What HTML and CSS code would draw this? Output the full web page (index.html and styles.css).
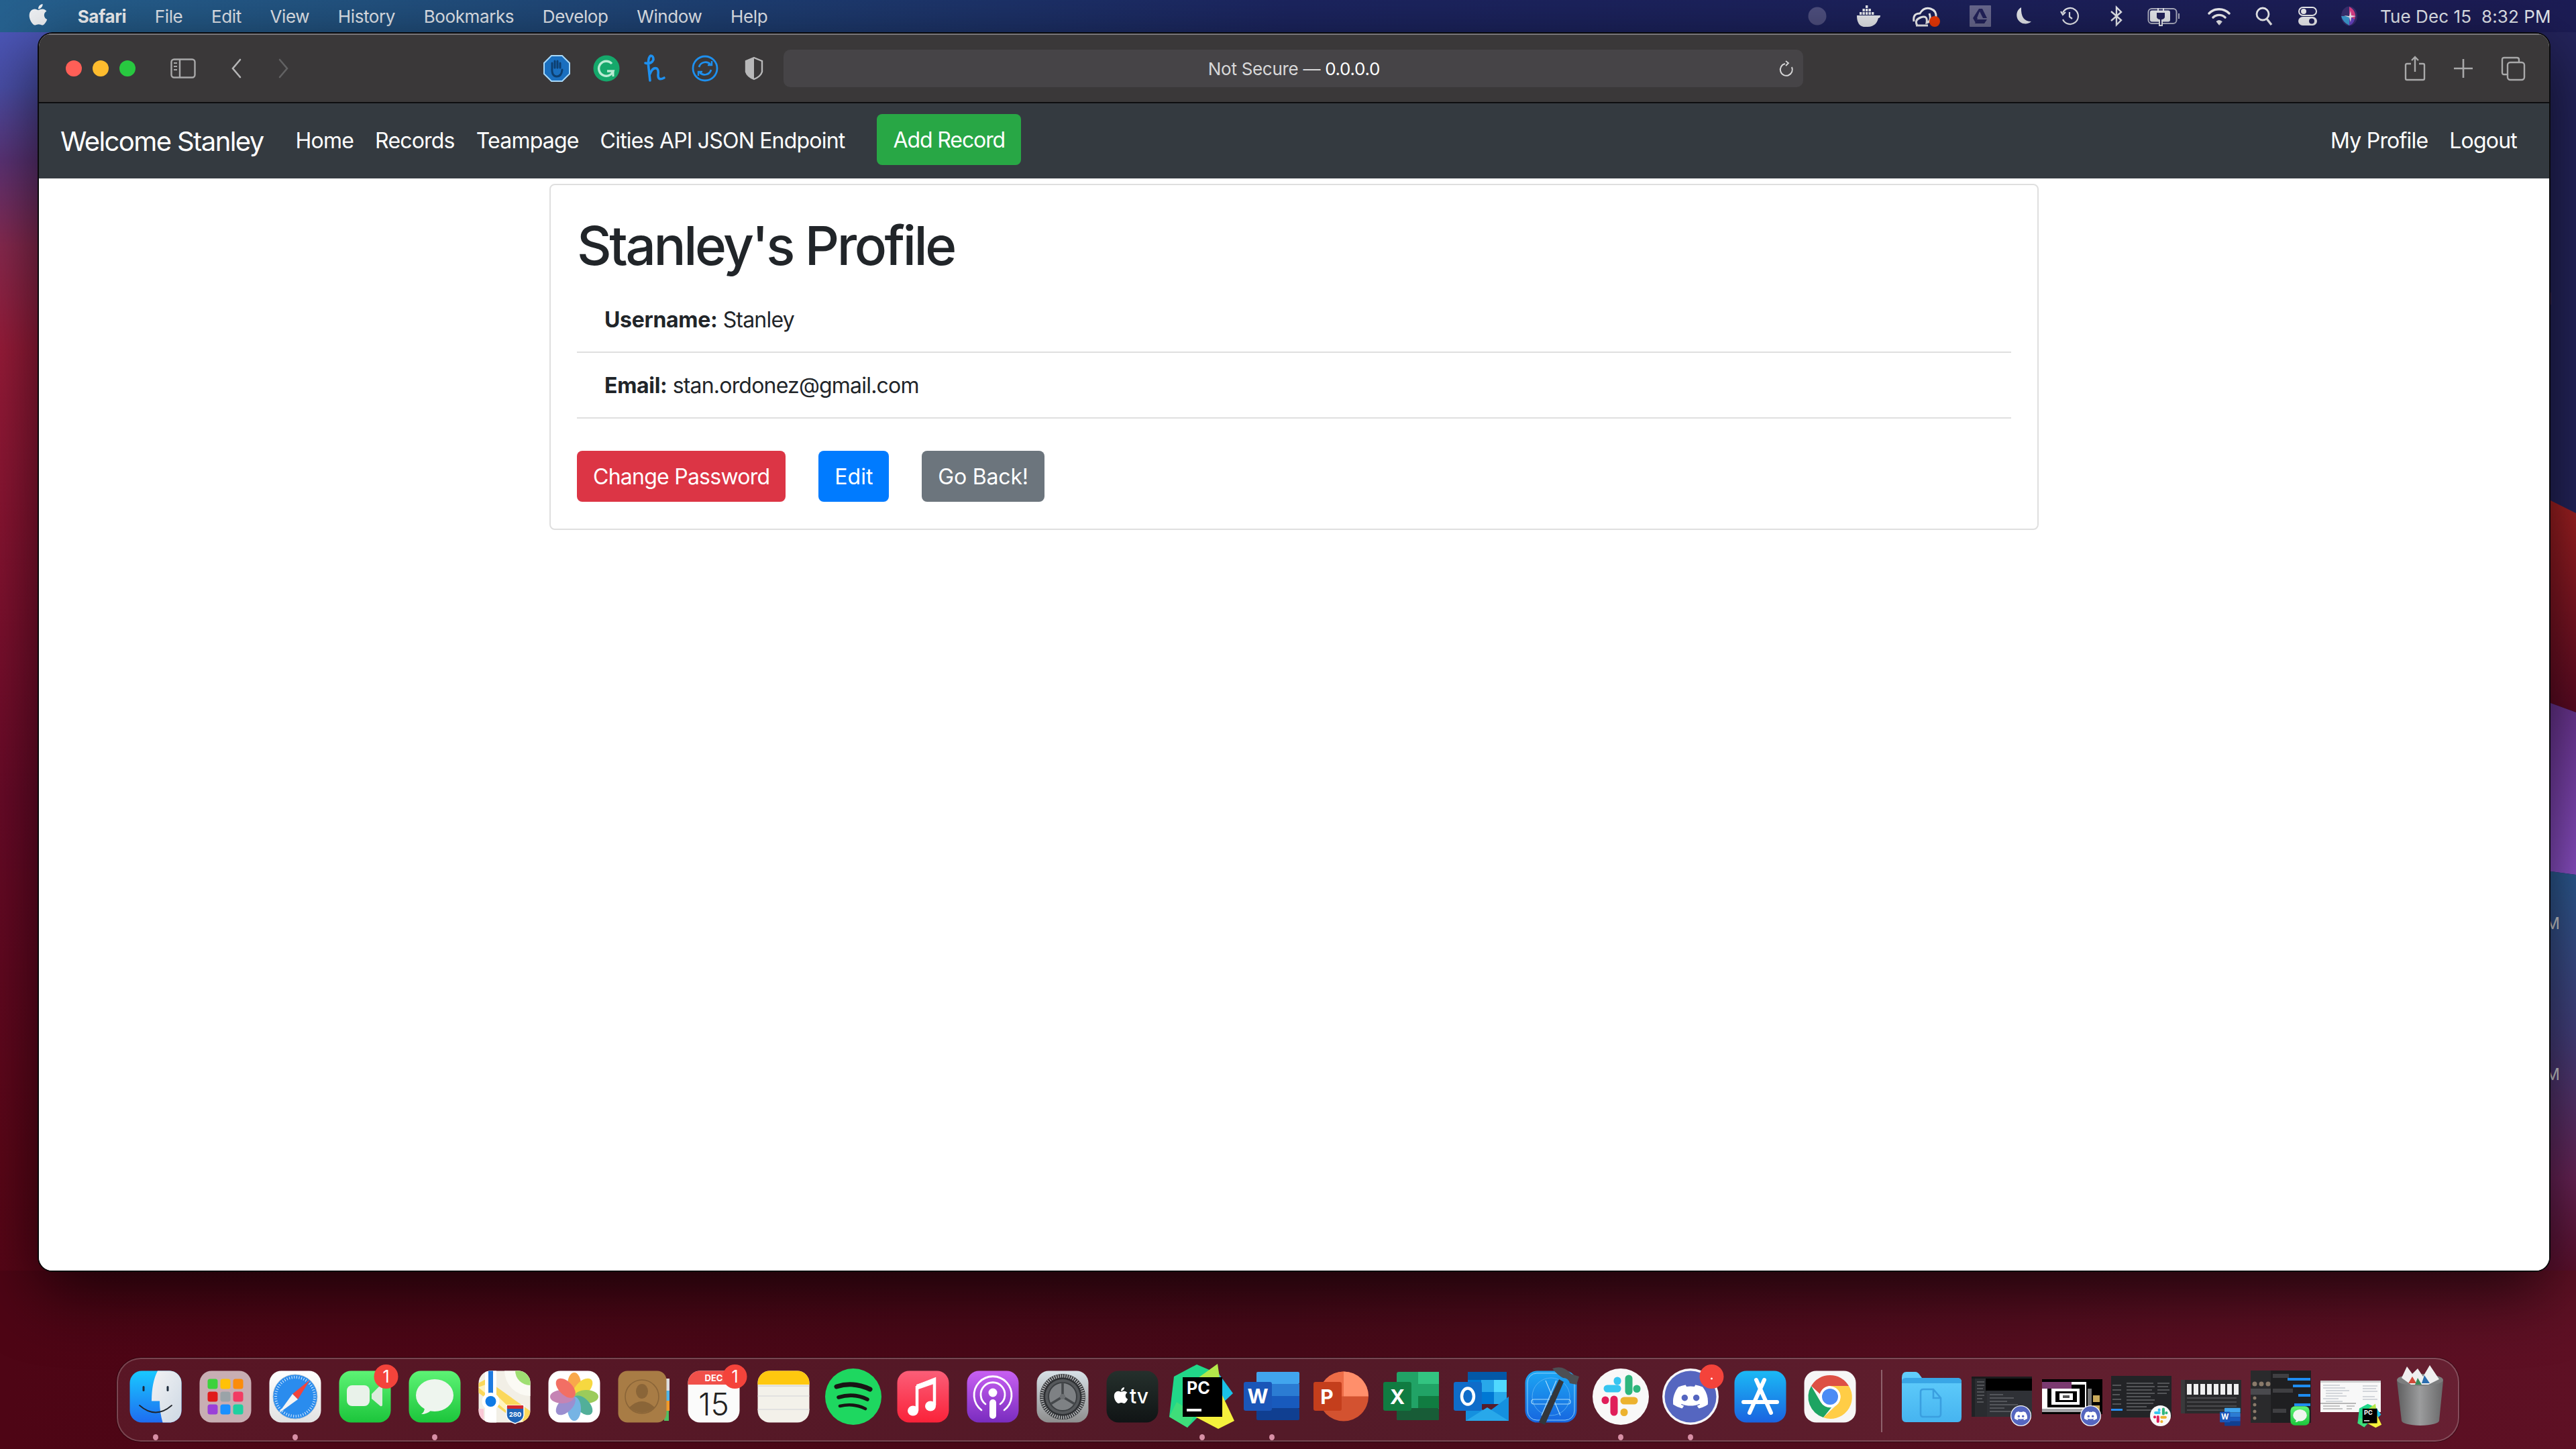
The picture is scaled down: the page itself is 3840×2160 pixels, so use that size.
FILE: index.html
```html
<!DOCTYPE html>
<html lang="en">
<head>
<meta charset="utf-8">
<title>Stanley's Profile</title>
<link rel="stylesheet" href="styles.css">
</head>
<body class="desktop">
<svg class="defs" width="0" height="0" aria-hidden="true">
  <defs>
    <linearGradient id="g-finder" x1="0" y1="0" x2="0" y2="1"><stop offset="0" stop-color="#19c9ff"/><stop offset="1" stop-color="#1e6cf0"/></linearGradient>
    <linearGradient id="g-finderw" x1="0" y1="0" x2="1" y2="1"><stop offset="0" stop-color="#f3f3f4"/><stop offset="1" stop-color="#cdd8e4"/></linearGradient>
    <linearGradient id="g-green" x1="0" y1="0" x2="0" y2="1"><stop offset="0" stop-color="#5df375"/><stop offset="1" stop-color="#1cc53b"/></linearGradient>
    <linearGradient id="g-music" x1="0" y1="0" x2="0" y2="1"><stop offset="0" stop-color="#fb5e78"/><stop offset="1" stop-color="#fa2239"/></linearGradient>
    <linearGradient id="g-pod" x1="0" y1="0" x2="0" y2="1"><stop offset="0" stop-color="#c860f2"/><stop offset="1" stop-color="#7a2cbf"/></linearGradient>
    <linearGradient id="g-sys" x1="0" y1="0" x2="0" y2="1"><stop offset="0" stop-color="#d7e1e7"/><stop offset="1" stop-color="#8e8e8e"/></linearGradient>
    <linearGradient id="g-tv" x1="0" y1="0" x2="0" y2="1"><stop offset="0" stop-color="#25302c"/><stop offset="1" stop-color="#101415"/></linearGradient>
    <linearGradient id="g-app" x1="0" y1="0" x2="0" y2="1"><stop offset="0" stop-color="#1bb9f5"/><stop offset="1" stop-color="#1a63e0"/></linearGradient>
    <linearGradient id="g-xc" x1="0" y1="0" x2="0" y2="1"><stop offset="0" stop-color="#1ca6f3"/><stop offset="1" stop-color="#1766e0"/></linearGradient>
    <linearGradient id="g-trash" x1="0" y1="0" x2="1" y2="0"><stop offset="0" stop-color="#5f5f60"/><stop offset=".5" stop-color="#9b9c9d"/><stop offset="1" stop-color="#69696a"/></linearGradient>
    <linearGradient id="g-white" x1="0" y1="0" x2="0" y2="1"><stop offset="0" stop-color="#ffffff"/><stop offset="1" stop-color="#e2e2e2"/></linearGradient>
    <linearGradient id="g-folder" x1="0" y1="0" x2="0" y2="1"><stop offset="0" stop-color="#62cffc"/><stop offset="1" stop-color="#46b4f0"/></linearGradient>
    <linearGradient id="w-left" x1="0" y1="0" x2="0" y2="1">
      <stop offset="0" stop-color="#4c5ac0"/><stop offset=".06" stop-color="#4a4fa8"/><stop offset=".11" stop-color="#5c3478"/><stop offset=".17" stop-color="#8a2a50"/><stop offset=".24" stop-color="#9a1c3a"/><stop offset=".36" stop-color="#8a1432"/><stop offset=".55" stop-color="#6a0a28"/><stop offset=".8" stop-color="#5c0618"/><stop offset="1" stop-color="#4f0515"/>
    </linearGradient>
    <linearGradient id="w-bottom" x1="0" y1="0" x2="1" y2="0"><stop offset="0" stop-color="#4e0515"/><stop offset=".5" stop-color="#470918"/><stop offset="1" stop-color="#5e1024"/></linearGradient>
    <linearGradient id="w-red" x1="0" y1="0" x2="0" y2="1"><stop offset="0" stop-color="#a82222"/><stop offset="1" stop-color="#5c0a24"/></linearGradient>
    <linearGradient id="w-purple" x1="0" y1="0" x2="0" y2="1"><stop offset="0" stop-color="#6a3490"/><stop offset="1" stop-color="#8f52cc"/></linearGradient>
    <linearGradient id="w-blue" x1="0" y1="0" x2="0" y2="1"><stop offset="0" stop-color="#2c5d96"/><stop offset=".4" stop-color="#45407f"/><stop offset=".75" stop-color="#6a2458"/><stop offset="1" stop-color="#5a0d28"/></linearGradient>

    <clipPath id="c-square"><rect x="3.5" y="3.5" width="77" height="77" rx="18"/></clipPath>

    <symbol id="apple" viewBox="0 0 24 24"><path d="M17.05 20.28c-.98.95-2.05.8-3.08.35-1.09-.46-2.09-.48-3.24 0-1.44.62-2.2.44-3.06-.35C2.79 15.25 3.51 7.59 9.05 7.31c1.35.07 2.29.74 3.08.8 1.18-.24 2.31-.93 3.57-.84 1.51.12 2.65.72 3.4 1.8-3.12 1.87-2.38 5.98.48 7.13-.57 1.5-1.31 2.99-2.54 4.09zM12.03 7.25c-.15-2.23 1.66-4.07 3.74-4.25.29 2.58-2.34 4.5-3.74 4.25z"/></symbol>

    <symbol id="i-finder" viewBox="0 0 84 84" class="sym">
      <rect x="3.5" y="3.5" width="77" height="77" rx="18" fill="url(#g-finder)"/>
      <path d="M45 3.5H62.5A18 18 0 0 1 80.5 21.5V62.5A18 18 0 0 1 62.5 80.5H52.5C49.5 70 48 60 48 48.5H36C36 30 39 15 45 3.5Z" fill="url(#g-finderw)"/>
      <rect x="22.5" y="26" width="3" height="8" rx="1.5" fill="#1b2a3a"/><rect x="58.5" y="26" width="3" height="8" rx="1.5" fill="#1b2a3a"/>
      <path d="M18 55Q42 76 66 55" fill="none" stroke="#20242a" stroke-width="1.8" stroke-linecap="round"/>
    </symbol>
    <symbol id="i-launch" viewBox="0 0 84 84" class="sym">
      <rect x="3.5" y="3.5" width="77" height="77" rx="18" fill="#c8aeb3"/>
      <rect x="15.5" y="15.5" width="15" height="15" rx="3.5" fill="#3cd23c"/><rect x="34.5" y="15.5" width="15" height="15" rx="3.5" fill="#ffc107"/><rect x="53.5" y="15.5" width="15" height="15" rx="3.5" fill="#fb8c0c"/>
      <rect x="15.5" y="34.5" width="15" height="15" rx="3.5" fill="#e01b1b"/><rect x="34.5" y="34.5" width="15" height="15" rx="3.5" fill="#9aa3a8"/><rect x="53.5" y="34.5" width="15" height="15" rx="3.5" fill="#f23c63"/>
      <rect x="15.5" y="53.5" width="15" height="15" rx="3.5" fill="#9a3fd8"/><rect x="34.5" y="53.5" width="15" height="15" rx="3.5" fill="#1a90ff"/><rect x="53.5" y="53.5" width="15" height="15" rx="3.5" fill="#1fd0a0"/>
    </symbol>
    <symbol id="i-safari" viewBox="0 0 84 84" class="sym">
      <rect x="3.5" y="3.5" width="77" height="77" rx="18" fill="url(#g-white)"/>
      <circle cx="42" cy="42" r="33" fill="#2a8cee" stroke="#9bb9d6" stroke-width="1"/>
      <circle cx="42" cy="42" r="29" fill="none" stroke="#fff" stroke-width="4" stroke-dasharray="1 2.64" opacity=".85"/>
      <polygon points="64,17 46,46 38,38" fill="#f0443c"/><polygon points="17,67 38,38 46,46" fill="#f4f4f4"/>
    </symbol>
    <symbol id="i-facetime" viewBox="0 0 84 84" class="sym">
      <rect x="3.5" y="3.5" width="77" height="77" rx="18" fill="url(#g-green)"/>
      <rect x="15" y="25" width="34" height="31" rx="8" fill="#e9f2ea"/>
      <path d="M52 38L65 25Q68 24 68 27V54Q68 57 65 56L52 45Z" fill="#dcebdd"/>
    </symbol>
    <symbol id="i-messages" viewBox="0 0 84 84" class="sym">
      <rect x="3.5" y="3.5" width="77" height="77" rx="18" fill="url(#g-green)"/>
      <ellipse cx="42" cy="40" rx="28" ry="24" fill="#eef5ee"/>
      <path d="M27 58Q27 65 22 68Q31 68 37 62Z" fill="#eef5ee"/>
    </symbol>
    <symbol id="i-maps" viewBox="0 0 84 84" class="sym">
      <g clip-path="url(#c-square)">
        <rect x="3" y="3" width="78" height="78" fill="#f2efe6"/>
        <circle cx="80" cy="3" r="38" fill="#fbfaf4"/><circle cx="80" cy="3" r="22" fill="#9fdf72"/>
        <rect x="3" y="60" width="8" height="22" fill="#f9c9d6"/>
        <polygon points="3,22 14,16 84,66 84,84 68,84 3,36" fill="#fbd85b"/>
        <polygon points="3,28 14,24 76,84 70,84" fill="#fff3c0"/>
        <rect x="13" y="3" width="17" height="78" fill="#fff"/><rect x="18" y="3" width="7" height="38" fill="#1f7ae0"/>
        <circle cx="21.5" cy="49" r="13" fill="#fff"/><circle cx="21.5" cy="49" r="8" fill="#0f7ae5"/>
      </g>
      <path d="M45 55H71V70Q70 78 58 82Q46 78 45 70Z" fill="#1e65b8" stroke="#fff" stroke-width="1.5"/>
      <rect x="46" y="55" width="24" height="5" fill="#d2272d"/>
      <text x="58" y="72" class="svg-bold" font-size="9.5" fill="#fff" text-anchor="middle">280</text>
    </symbol>
    <symbol id="i-photos" viewBox="0 0 84 84" class="sym">
      <rect x="3.5" y="3.5" width="77" height="77" rx="18" fill="#fff"/>
      <g opacity=".85">
        <ellipse cx="42" cy="24" rx="10" ry="18" fill="#f89a2c"/>
        <ellipse cx="42" cy="24" rx="10" ry="18" fill="#f5d21f" transform="rotate(45 42 42)"/>
        <ellipse cx="42" cy="24" rx="10" ry="18" fill="#8ac33f" transform="rotate(90 42 42)"/>
        <ellipse cx="42" cy="24" rx="10" ry="18" fill="#35a288" transform="rotate(135 42 42)"/>
        <ellipse cx="42" cy="24" rx="10" ry="18" fill="#5fa8e0" transform="rotate(180 42 42)"/>
        <ellipse cx="42" cy="24" rx="10" ry="18" fill="#8a7cc8" transform="rotate(225 42 42)"/>
        <ellipse cx="42" cy="24" rx="10" ry="18" fill="#bb6fa8" transform="rotate(270 42 42)"/>
        <ellipse cx="42" cy="24" rx="10" ry="18" fill="#f0564a" transform="rotate(315 42 42)"/>
      </g>
    </symbol>
    <symbol id="i-contacts" viewBox="0 0 84 84" class="sym">
      <rect x="72" y="15" width="8" height="18" fill="#ddd"/><rect x="72" y="33" width="8" height="15" fill="#4fb5e8"/><rect x="72" y="48" width="8" height="15" fill="#f09a2a"/><rect x="72" y="63" width="7" height="15" fill="#4fc060"/>
      <rect x="3.5" y="3.5" width="72" height="77" rx="14" fill="#a87c45"/>
      <circle cx="39" cy="42" r="25" fill="none" stroke="#8a6538" stroke-width="1.6"/>
      <ellipse cx="39" cy="34" rx="9" ry="11" fill="#8a6538"/>
      <path d="M20 58Q39 40 58 58Q39 74 20 58Z" fill="#8a6538"/>
    </symbol>
    <symbol id="i-calendar" viewBox="0 0 84 84" class="sym">
      <rect x="3.5" y="3.5" width="77" height="77" rx="18" fill="#fbfbfb"/>
      <path d="M3.5 24V21.5A18 18 0 0 1 21.5 3.5H62.5A18 18 0 0 1 80.5 21.5V24Z" fill="#f0504a"/>
      <text x="42" y="19" class="svg-bold" font-size="13" fill="#fff" text-anchor="middle">DEC</text>
      <text x="42" y="70" class="svg-light" font-size="46" fill="#222" text-anchor="middle">15</text>
    </symbol>
    <symbol id="i-notes" viewBox="0 0 84 84" class="sym">
      <rect x="3.5" y="3.5" width="77" height="77" rx="18" fill="#f3f1ea"/>
      <path d="M3.5 24V21.5A18 18 0 0 1 21.5 3.5H62.5A18 18 0 0 1 80.5 21.5V24Z" fill="#fec80f"/>
      <line x1="3.5" y1="26" x2="80.5" y2="26" stroke="#bbb" stroke-width="1.6" stroke-dasharray="1 1"/>
      <line x1="3.5" y1="41" x2="80.5" y2="41" stroke="#ddd" stroke-width="1.4"/><line x1="3.5" y1="61" x2="80.5" y2="61" stroke="#ddd" stroke-width="1.4"/>
    </symbol>
    <symbol id="i-spotify" viewBox="0 0 84 84" class="sym">
      <circle cx="42" cy="42" r="42" fill="#1ed760"/>
      <g fill="none" stroke="#191414" stroke-linecap="round">
        <path d="M17 27Q42 19 67 31" stroke-width="7"/><path d="M20 43Q42 36 63 46" stroke-width="5.6"/><path d="M22 56Q42 51 60 60" stroke-width="4.6"/>
      </g>
    </symbol>
    <symbol id="i-music" viewBox="0 0 84 84" class="sym">
      <rect x="3.5" y="3.5" width="77" height="77" rx="18" fill="url(#g-music)"/>
      <path d="M34 26L59 16V55" fill="none" stroke="#fff" stroke-width="4.5"/>
      <path d="M33 26V63" fill="none" stroke="#fff" stroke-width="4.5"/>
      <ellipse cx="27" cy="63" rx="8" ry="7.5" fill="#fff"/><ellipse cx="53" cy="56" rx="8" ry="7.5" fill="#fff"/>
      <polygon points="32,24 61,14 61,22 32,32" fill="#fff"/>
    </symbol>
    <symbol id="i-podcasts" viewBox="0 0 84 84" class="sym">
      <rect x="3.5" y="3.5" width="77" height="77" rx="18" fill="url(#g-pod)"/>
      <g fill="none" stroke="#fff" stroke-linecap="round">
        <path d="M25 62A28 28 0 1 1 59 62" stroke-width="2.8"/><path d="M31 53A18 18 0 1 1 53 53" stroke-width="2.8"/>
      </g>
      <circle cx="42" cy="36" r="6.5" fill="#fff"/><rect x="37" y="46" width="10" height="29" rx="5" fill="#fff"/>
    </symbol>
    <symbol id="i-system" viewBox="0 0 84 84" class="sym">
      <rect x="3.5" y="3.5" width="77" height="77" rx="18" fill="url(#g-sys)"/>
      <circle cx="42" cy="42" r="34" fill="#2e3033"/>
      <circle cx="42" cy="42" r="31" fill="none" stroke="#b4b6b8" stroke-width="5" stroke-dasharray="1.6 1.7"/>
      <circle cx="42" cy="42" r="26" fill="#55585b"/><circle cx="42" cy="42" r="21" fill="#7e8184" stroke="#3b3e41" stroke-width="2"/>
      <g stroke="#45484b" stroke-width="3.6"><line x1="42" y1="42" x2="42" y2="21"/><line x1="42" y1="42" x2="24" y2="53"/><line x1="42" y1="42" x2="60" y2="53"/></g>
      <circle cx="42" cy="42" r="4" fill="#6c6f72"/>
    </symbol>
    <symbol id="i-tv" viewBox="0 0 84 84" class="sym">
      <rect x="3.5" y="3.5" width="77" height="77" rx="18" fill="url(#g-tv)"/>
      <use href="#apple" x="9" y="24" width="32" height="32" fill="#fff"/>
      <text x="38" y="52" class="svg-med" font-size="30" fill="#fff">tv</text>
    </symbol>
    <symbol id="i-pycharm" viewBox="0 0 84 84" class="sym">
      <polygon points="67,8 88,37 72,52" fill="#19c1e6"/>
      <polygon points="0,12 34,-6 62,6 60,48 20,88 -7,72" fill="#21d789"/>
      <polygon points="36,14 65,-7 72,40" fill="#b4e84a"/>
      <polygon points="72,40 90,78 66,90 28,70 36,50" fill="#f5f03c"/>
      <polygon points="-7,72 20,88 32,68 4,50" fill="#3fdd7a"/>
      <rect x="13" y="13" width="59" height="59" fill="#000"/>
      <text x="19" y="38" class="svg-bold" font-size="25" fill="#fff">PC</text>
      <rect x="19" y="60" width="22" height="4" fill="#fff"/>
    </symbol>
    <symbol id="i-word" viewBox="0 0 84 84" class="sym">
      <rect x="19" y="5" width="64" height="18" rx="2" fill="#41a5ee"/><rect x="19" y="23" width="64" height="18" fill="#2b7cd3"/><rect x="19" y="41" width="64" height="18" fill="#185abd"/><rect x="19" y="59" width="64" height="18" rx="2" fill="#103f91"/>
      <rect x="0" y="20" width="42" height="43" rx="3" fill="#1a56b8"/>
      <text x="21" y="52" class="svg-bold" font-size="30" fill="#fff" text-anchor="middle">W</text>
    </symbol>
    <symbol id="i-ppt" viewBox="0 0 84 84" class="sym">
      <circle cx="45" cy="41.5" r="37" fill="#d35230"/>
      <path d="M45 4.5A37 37 0 0 1 82 41.5H45Z" fill="#ff8f6b"/>
      <path d="M45 4.5A37 37 0 0 0 8 41.5H45Z" fill="#ed6c47"/>
      <rect x="0" y="20" width="42" height="43" rx="3" fill="#c43e1c"/>
      <text x="20" y="53" class="svg-bold" font-size="30" fill="#fff" text-anchor="middle">P</text>
    </symbol>
    <symbol id="i-excel" viewBox="0 0 84 84" class="sym">
      <rect x="20" y="5" width="63" height="72" rx="3" fill="#21a366"/>
      <rect x="52" y="5" width="31" height="18" fill="#33c481"/><rect x="52" y="41" width="31" height="18" fill="#107c41"/>
      <rect x="20" y="59" width="63" height="18" rx="2" fill="#185c37"/><rect x="20" y="23" width="32" height="18" fill="#21a366"/>
      <rect x="0" y="20" width="42" height="43" rx="3" fill="#107c41"/>
      <text x="21" y="53" class="svg-bold" font-size="30" fill="#fff" text-anchor="middle">X</text>
    </symbol>
    <symbol id="i-outlook" viewBox="0 0 84 84" class="sym">
      <rect x="22" y="5" width="58" height="12" fill="#0358a7"/>
      <rect x="22" y="17" width="20" height="18" fill="#0078d4"/><rect x="42" y="17" width="19" height="18" fill="#28a8ea"/><rect x="61" y="17" width="19" height="18" fill="#50d9ff"/>
      <rect x="22" y="35" width="20" height="18" fill="#0364b8"/><rect x="42" y="35" width="19" height="18" fill="#0078d4"/><rect x="61" y="35" width="19" height="18" fill="#28a8ea"/>
      <polygon points="19,78 19,46 51,66 83,42 83,78" fill="#1490df"/>
      <polygon points="19,78 51,58 83,78" fill="#28a8ea"/>
      <rect x="1" y="20" width="42" height="43" rx="3" fill="#0f6cc9"/>
      <ellipse cx="22" cy="41.5" rx="9" ry="12" fill="none" stroke="#fff" stroke-width="4.5"/>
    </symbol>
    <symbol id="i-xcode" viewBox="0 0 84 84" class="sym">
      <rect x="3.5" y="3.5" width="77" height="77" rx="18" fill="url(#g-xc)"/>
      <rect x="7" y="7" width="70" height="70" rx="14" fill="none" stroke="#8fd0fa" stroke-width="1"/>
      <circle cx="42" cy="42" r="28" fill="none" stroke="#66b8f4" stroke-width=".8"/>
      <g fill="none" stroke="#a9dcfb" stroke-width="1.2"><path d="M34 18L56 70M50 18L28 70"/><rect x="13" y="46" width="58" height="7" rx="3.5"/></g>
      <polygon points="54,16 61,20 33,84 24,80" fill="#33363b"/>
      <path d="M44 0Q60 -6 72 8L84 12L80 24L70 22Q68 14 60 14Q52 10 44 0Z" fill="#4d4f54"/>
    </symbol>
    <symbol id="i-slack" viewBox="0 0 84 84" class="sym">
      <circle cx="42" cy="42" r="42" fill="#f8f8f8"/>
      <g stroke-linecap="round" stroke-width="11" fill="none">
        <path d="M37 30H22" stroke="#36c5f0"/><path d="M37 18V19" stroke="#36c5f0"/>
        <path d="M54 15V34" stroke="#2eb67d"/><path d="M66 30V30.5" stroke="#2eb67d"/>
        <path d="M47 48H62" stroke="#ecb22e"/><path d="M47 65V65.5" stroke="#ecb22e"/>
        <path d="M32 46V65" stroke="#e01e5a"/><path d="M19 47V47.5" stroke="#e01e5a"/>
      </g>
    </symbol>
    <symbol id="i-discord" viewBox="0 0 84 84" class="sym">
      <circle cx="42" cy="42" r="42" fill="#f6f6f8"/>
      <circle cx="42" cy="42" r="38.5" fill="#5566c0"/>
      <svg x="16" y="19" width="52" height="46" viewBox="0 0 24 24" preserveAspectRatio="none"><path fill="#fff" d="M20.317 4.37a19.791 19.791 0 0 0-4.885-1.515.074.074 0 0 0-.079.037c-.21.375-.444.864-.608 1.25a18.27 18.27 0 0 0-5.487 0 12.64 12.64 0 0 0-.617-1.25.077.077 0 0 0-.079-.037A19.736 19.736 0 0 0 3.677 4.37a.07.07 0 0 0-.032.027C.533 9.046-.32 13.58.099 18.057a.082.082 0 0 0 .031.057 19.9 19.9 0 0 0 5.993 3.03.078.078 0 0 0 .084-.028 14.09 14.09 0 0 0 1.226-1.994.076.076 0 0 0-.041-.106 13.107 13.107 0 0 1-1.872-.892.077.077 0 0 1-.008-.128 10.2 10.2 0 0 0 .372-.292.074.074 0 0 1 .077-.01c3.928 1.793 8.18 1.793 12.062 0a.074.074 0 0 1 .078.01c.12.098.246.198.373.292a.077.077 0 0 1-.006.127 12.299 12.299 0 0 1-1.873.892.077.077 0 0 0-.041.107c.36.698.772 1.362 1.225 1.993a.076.076 0 0 0 .084.028 19.839 19.839 0 0 0 6.002-3.03.077.077 0 0 0 .032-.054c.5-5.177-.838-9.674-3.549-13.66a.061.061 0 0 0-.031-.03zM8.02 15.33c-1.183 0-2.157-1.085-2.157-2.419 0-1.333.956-2.419 2.157-2.419 1.21 0 2.176 1.096 2.157 2.42 0 1.333-.956 2.418-2.157 2.418zm7.975 0c-1.183 0-2.157-1.085-2.157-2.419 0-1.333.955-2.419 2.157-2.419 1.21 0 2.176 1.096 2.157 2.42 0 1.333-.946 2.418-2.157 2.418z"/></svg>
    </symbol>
    <symbol id="i-appstore" viewBox="0 0 84 84" class="sym">
      <rect x="3.5" y="3.5" width="77" height="77" rx="18" fill="url(#g-app)"/>
      <g fill="none" stroke="#fff" stroke-linecap="round">
        <path d="M36 17L58 66" stroke-width="6"/><path d="M48 17L26 66" stroke-width="6"/><path d="M17 50H67" stroke-width="6"/>
      </g>
    </symbol>
    <symbol id="i-chrome" viewBox="0 0 84 84" class="sym">
      <rect x="3.5" y="3.5" width="77" height="77" rx="18" fill="#f6f6f6"/>
      <path d="M42 10A32 32 0 0 1 70 26H42A16 16 0 0 0 27 38L14 26A32 32 0 0 1 42 10Z" fill="#dd5044"/>
      <path d="M14 26L28 50A16 16 0 0 0 44 58L32 73A32 32 0 0 1 14 26Z" fill="#1da462"/>
      <path d="M70 26A32 32 0 0 1 32 73L50 56A16 16 0 0 0 55 34L42 26Z" fill="#ffcd46"/>
      <circle cx="42" cy="42" r="15.5" fill="#fff"/><circle cx="42" cy="42" r="12" fill="#4c8bf5"/>
    </symbol>
  </defs>
</svg>

<svg class="wallpaper" width="3840" height="2160" viewBox="0 0 3840 2160" aria-hidden="true">
  <rect x="0" y="0" width="1920" height="2160" fill="url(#w-left)"/>
  <rect x="1920" y="0" width="1920" height="2160" fill="#24245c"/>
  <polygon points="3780,735 3840,765 3840,1062 3780,1040" fill="url(#w-red)"/>
  <polygon points="3780,1040 3840,1062 3840,1304 3780,1296" fill="url(#w-purple)"/>
  <polygon points="3780,1296 3840,1304 3840,1910 3780,1910" fill="url(#w-blue)"/>
  <rect x="0" y="1894" width="3840" height="266" fill="url(#w-bottom)"/>
</svg>

<span class="desk-label label-a">PM</span>
<span class="desk-label label-b">PM</span>
<span class="desk-label label-c">PM</span>

<header class="menubar">
  <nav class="menu-left">
    <svg class="apple-logo" width="28" height="32" viewBox="4 3 16 18.3" fill="#f0f2f5"><use href="#apple" x="0" y="0" width="24" height="24"/></svg>
    <span class="menu-app">Safari</span>
    <span>File</span><span>Edit</span><span>View</span><span>History</span><span>Bookmarks</span><span>Develop</span><span>Window</span><span>Help</span>
  </nav>
  <div class="status">
    <svg width="28" height="30" viewBox="0 0 28 30"><circle cx="14" cy="15" r="13.5" fill="#4f5080"/></svg>
    <svg width="40" height="32" viewBox="0 0 40 32" fill="#eceef2"><path d="M2 15H37Q37 19 34 19Q31 32 18 32H12Q2 30 2 15Z"/><g fill="#eceef2"><rect x="6" y="10" width="3.4" height="4"/><rect x="10.5" y="10" width="3.4" height="4"/><rect x="15" y="10" width="3.4" height="4"/><rect x="19.5" y="10" width="3.4" height="4"/><rect x="24" y="10" width="3.4" height="4"/><rect x="10.5" y="5" width="3.4" height="4"/><rect x="15" y="5" width="3.4" height="4"/><rect x="19.5" y="5" width="3.4" height="4"/><rect x="15" y="0" width="3.4" height="4"/></g></svg>
    <svg width="44" height="32" viewBox="0 0 44 32"><path d="M3 24Q1 12 12 12Q18 2 28 5Q37 8 36 18" fill="none" stroke="#f2f2f4" stroke-width="3"/><path d="M8 30Q3 22 13 18Q24 14 22 26Q30 24 26 12" fill="none" stroke="#f2f2f4" stroke-width="3"/><path d="M6 30H24" stroke="#f2f2f4" stroke-width="3"/><ellipse cx="34" cy="24" rx="8" ry="8" fill="#f23a08"/></svg>
    <svg width="32" height="32" viewBox="0 0 32 32"><rect width="32" height="32" rx="1" fill="#6a6a90"/><path d="M14 5H19L26 19H12L9 26L5 19Z" fill="#23235c"/><path d="M15 9L20 19H11Z" fill="#6a6a90"/><path d="M11 21H26L22 27H8Z" fill="#23235c"/></svg>
    <svg width="28" height="28" viewBox="0 0 28 28"><path d="M11 1A13 13 0 1 0 26 22Q10 22 11 1Z" fill="#e9ebf0"/></svg>
    <svg width="30" height="28" viewBox="0 0 30 28" fill="none" stroke="#e9ebf0" stroke-width="2.2"><path d="M5 9A12 12 0 1 1 5 19"/><path d="M2 7L5 12L9 8"/><path d="M15 8V15L19 18"/></svg>
    <svg width="22" height="32" viewBox="0 0 22 32" fill="none" stroke="#e9ebf0" stroke-width="2.4"><path d="M3 9L18 22L11 29V3L18 10L3 23"/></svg>
    <svg width="50" height="28" viewBox="0 0 50 28"><rect x="1.500" y="3" width="42" height="22" rx="5" fill="none" stroke="#aeb0c4" stroke-width="2"/><rect x="4" y="5.500" width="30" height="17" rx="3" fill="#e9ebf0"/><path d="M47 10V18" stroke="#aeb0c4" stroke-width="2"/><path d="M16 2V8M24 2V8M13 8H27V15Q27 19 22 20V28H18V20Q13 19 13 15Z" fill="#23235c" stroke="#e9ebf0" stroke-width="2"/></svg>
    <svg width="36" height="28" viewBox="0 0 36 28" fill="none" stroke="#f2f2f5" stroke-linecap="round"><path d="M3 10A21 21 0 0 1 33 10" stroke-width="3.400"/><path d="M9 16A13 13 0 0 1 27 16" stroke-width="3.400"/><path d="M18 27L14 22Q18 19 22 22Z" fill="#f2f2f5" stroke-width="1"/></svg>
    <svg width="26" height="28" viewBox="0 0 26 28" fill="none" stroke="#f2f2f5" stroke-width="2.800"><circle cx="11" cy="11" r="9"/><path d="M17 18L24 27" stroke-width="3.400"/></svg>
    <svg width="28" height="28" viewBox="0 0 28 28"><rect x="1" y="1" width="26" height="12" rx="6" fill="#23235c" stroke="#f2f2f5" stroke-width="2"/><circle cx="8" cy="7" r="4" fill="#f2f2f5"/><rect x="0" y="15" width="28" height="13" rx="6.500" fill="#f2f2f5"/><circle cx="20" cy="21.500" r="4" fill="#23235c"/></svg>
    <svg width="24" height="30" viewBox="0 0 24 30"><ellipse cx="12" cy="15" rx="12" ry="14.500" fill="#3a2f70"/><path d="M12 1Q24 8 20 20L12 15Z" fill="#e0408a"/><path d="M0 15Q2 24 12 29L12 15Z" fill="#3f9fd8"/><path d="M12 15L20 20Q18 27 12 29Z" fill="#6a44c8"/><path d="M4 14L12 15L14 7L15 14L22 15L15 17L14 24L12 17Z" fill="#f2f2f8"/></svg>
    <span class="clock">Tue Dec 15&nbsp; 8:32 PM</span>
  </div>
</header>

<main class="window">
  <div class="toolbar">
    <div class="traffic"><i class="light red"></i><i class="light amber"></i><i class="light green"></i></div>
    <svg class="tb-sidebar" width="38" height="30" viewBox="0 0 38 30" fill="none" stroke="#a9a9aa" stroke-width="2.400"><rect x="1.500" y="1.500" width="35" height="27" rx="4"/><path d="M14 1.500V28.500"/><path d="M5 7H10M5 12H10M5 17H10" stroke-width="2"/></svg>
    <svg class="tb-back" width="16" height="30" viewBox="0 0 16 30" fill="none" stroke="#b5b5b6" stroke-width="2.600" stroke-linecap="round"><path d="M14 2L3 15L14 28"/></svg>
    <svg class="tb-forward" width="16" height="30" viewBox="0 0 16 30" fill="none" stroke="#626263" stroke-width="2.600" stroke-linecap="round"><path d="M2 2L13 15L2 28"/></svg>
    <div class="extensions">
      <svg width="40" height="40" viewBox="0 0 40 40"><polygon points="12,1 28,1 39,12 39,28 28,39 12,39 1,28 1,12" fill="#1a6fbf" stroke="#a8d8f8" stroke-width="2"/><path d="M13 19V12M17 19V9M21 19V9M25 19V12M13 19Q12 32 20 32Q27 32 28 22" fill="none" stroke="#0d3f70" stroke-width="3" stroke-linecap="round"/></svg>
      <svg width="40" height="40" viewBox="0 0 40 40"><circle cx="20" cy="20" r="19.500" fill="#15a86b"/><path d="M28 13A11 11 0 1 0 30 24H21" fill="none" stroke="#b9ecd3" stroke-width="3.400"/><path d="M30 24V32" stroke="#b9ecd3" stroke-width="3"/></svg>
      <svg width="40" height="40" viewBox="0 0 40 40" fill="none" stroke="#1e90ef" stroke-width="3.600" stroke-linecap="round"><path d="M5 12Q14 14 17 7Q17 1 13 1Q8 4 10 20L12 38"/><path d="M12 28Q16 18 22 20Q25 22 24 30Q24 39 33 34"/></svg>
      <svg width="40" height="40" viewBox="0 0 40 40" fill="none" stroke="#1e90ef" stroke-width="2.800"><circle cx="20" cy="20" r="18"/><path d="M11 18A10 10 0 0 1 28 14"/><path d="M29 22A10 10 0 0 1 12 26"/><path d="M24 15H30V9" stroke-width="2.400"/><path d="M16 25H10V31" stroke-width="2.400"/></svg>
      <svg class="ext-shield" width="28" height="34" viewBox="0 0 28 34"><path d="M14 1L26 6V22Q24 29 14 33Q4 29 2 22V6Z" fill="none" stroke="#b8b8b9" stroke-width="2.400"/><path d="M14 1L2 6V22Q4 29 14 33Z" fill="#b8b8b9"/></svg>
    </div>
    <div class="address">
      <span class="address-text"><span class="dim">Not Secure — </span>0.0.0.0</span>
      <svg class="reload" width="22" height="26" viewBox="0 0 22 26" fill="none" stroke="#d5d5d6" stroke-width="2"><path d="M9 5A9 9 0 1 0 19 10"/><path d="M10 1L14 4L10 8" stroke-width="1.800"/></svg>
    </div>
    <div class="toolbar-right">
      <svg width="32" height="38" viewBox="0 0 32 38" fill="none" stroke="#a9a9aa" stroke-width="2.400"><path d="M10 12H4Q2 12 2 14V34Q2 36 4 36H28Q30 36 30 34V14Q30 12 28 12H22"/><path d="M16 24V2M11 7L16 2L21 7"/></svg>
      <svg width="28" height="28" viewBox="0 0 28 28" stroke="#a9a9aa" stroke-width="2.600"><path d="M14 0V28M0 14H28"/></svg>
      <svg width="36" height="36" viewBox="0 0 36 36" fill="none" stroke="#a9a9aa" stroke-width="2.400"><rect x="10" y="9" width="25" height="26" rx="4"/><path d="M10 27H5Q2 27 2 24V5Q2 2 5 2H24Q27 2 27 5V9"/></svg>
    </div>
  </div>

  <nav class="navbar">
    <a class="brand">Welcome Stanley</a>
    <div class="nav-links">
      <a class="nav-link">Home</a>
      <a class="nav-link">Records</a>
      <a class="nav-link">Teampage</a>
      <a class="nav-link">Cities API JSON Endpoint</a>
    </div>
    <a class="btn btn-success nav-btn">Add Record</a>
    <div class="nav-links nav-right">
      <a class="nav-link">My Profile</a>
      <a class="nav-link">Logout</a>
    </div>
  </nav>

  <div class="page">
    <section class="card">
      <h1 class="card-title">Stanley's Profile</h1>
      <ul class="list">
        <li class="list-item"><strong>Username:</strong> Stanley</li>
        <li class="list-item"><strong>Email:</strong> stan.ordonez@gmail.com</li>
      </ul>
      <div class="actions">
        <a class="btn btn-danger">Change Password</a>
        <a class="btn btn-primary">Edit</a>
        <a class="btn btn-secondary">Go Back!</a>
      </div>
    </section>
  </div>
</main>

<footer class="dock">
  <div class="dock-item on"><svg width="84" height="84"><use href="#i-finder"/></svg></div>
  <div class="dock-item"><svg width="84" height="84"><use href="#i-launch"/></svg></div>
  <div class="dock-item on"><svg width="84" height="84"><use href="#i-safari"/></svg></div>
  <div class="dock-item"><svg width="84" height="84"><use href="#i-facetime"/><g><circle cx="73.500" cy="12" r="18" class="badge-c"/><text x="73.500" y="21" class="badge-t" text-anchor="middle">1</text></g></svg></div>
  <div class="dock-item on"><svg width="84" height="84"><use href="#i-messages"/></svg></div>
  <div class="dock-item"><svg width="84" height="84"><use href="#i-maps"/></svg></div>
  <div class="dock-item"><svg width="84" height="84"><use href="#i-photos"/></svg></div>
  <div class="dock-item"><svg width="84" height="84"><use href="#i-contacts"/></svg></div>
  <div class="dock-item"><svg width="84" height="84"><use href="#i-calendar"/><g><circle cx="73.500" cy="12" r="18" class="badge-c"/><text x="73.500" y="21" class="badge-t" text-anchor="middle">1</text></g></svg></div>
  <div class="dock-item"><svg width="84" height="84"><use href="#i-notes"/></svg></div>
  <div class="dock-item"><svg width="84" height="84"><use href="#i-spotify"/></svg></div>
  <div class="dock-item"><svg width="84" height="84"><use href="#i-music"/></svg></div>
  <div class="dock-item"><svg width="84" height="84"><use href="#i-podcasts"/></svg></div>
  <div class="dock-item"><svg width="84" height="84"><use href="#i-system"/></svg></div>
  <div class="dock-item"><svg width="84" height="84"><use href="#i-tv"/></svg></div>
  <div class="dock-item on"><svg width="84" height="84"><use href="#i-pycharm"/></svg></div>
  <div class="dock-item on"><svg width="84" height="84"><use href="#i-word"/></svg></div>
  <div class="dock-item"><svg width="84" height="84"><use href="#i-ppt"/></svg></div>
  <div class="dock-item"><svg width="84" height="84"><use href="#i-excel"/></svg></div>
  <div class="dock-item"><svg width="84" height="84"><use href="#i-outlook"/></svg></div>
  <div class="dock-item"><svg width="84" height="84"><use href="#i-xcode"/></svg></div>
  <div class="dock-item on"><svg width="84" height="84"><use href="#i-slack"/></svg></div>
  <div class="dock-item on"><svg width="84" height="84"><use href="#i-discord"/><g><circle cx="73.500" cy="12" r="18" class="badge-c"/><circle cx="73.500" cy="15" r="1.500" fill="#fff"/></g></svg></div>
  <div class="dock-item"><svg width="84" height="84"><use href="#i-appstore"/></svg></div>
  <div class="dock-item"><svg width="84" height="84"><use href="#i-chrome"/></svg></div>
  <div class="dock-sep"></div>
  <div class="dock-item"><svg width="84" height="84"><path d="M-3 14Q-3 5 4 5H17Q21 5 24 10L27 14H80Q86 14 86 20V72Q86 80 80 80H3Q-3 80 -3 72Z" fill="url(#g-folder)"/><path d="M-3 20Q-3 14 3 14H80Q86 14 86 20V22H-3Z" fill="#39a6e6"/><path d="M29 31H44L55 44V68Q55 72 51 72H29Q25 72 25 68V35Q25 31 29 31ZM44 31V44H55" fill="none" stroke="#3a9fe0" stroke-width="2.600"/></svg></div>
  <div class="dock-item"><svg width="84" height="84">
    <rect x="-3" y="12" width="90" height="60" fill="#2f3136"/><rect x="-3" y="12" width="90" height="3" fill="#1a1a1c"/><rect x="-3" y="15" width="5" height="57" fill="#202225"/><rect x="2" y="15" width="18" height="57" fill="#2a2c30"/><rect x="18" y="15" width="69" height="18" fill="#000"/><g stroke="#7a7c80" stroke-width="1"><path d="M24 39H44M24 44H60M24 49H50M24 54H66M24 59H46M24 64H56M5 20H16M5 25H16M5 30H14M5 35H16M5 40H16M5 45H13M5 50H15"/></g>
    <use href="#i-discord" x="55" y="55" width="31" height="31"/></svg></div>
  <div class="dock-item"><svg width="84" height="84">
    <rect x="-2" y="16" width="90" height="52" fill="#000"/><rect x="-2" y="20" width="66" height="44" fill="#fff"/><rect x="6" y="24" width="56" height="34" fill="#000"/><rect x="-2" y="20" width="44" height="10" fill="#7a3a70"/><rect x="12" y="30" width="42" height="24" fill="#fff"/><rect x="18" y="34" width="32" height="16" fill="#000"/><rect x="24" y="37" width="20" height="10" fill="#fff"/><rect x="29" y="40" width="10" height="4" fill="#555"/><rect x="-2" y="60" width="62" height="5" fill="#a5a5a8"/><rect x="66" y="30" width="6" height="30" fill="#777"/><rect x="74" y="40" width="10" height="10" fill="#c9a95a"/><rect x="74" y="55" width="10" height="10" fill="#c9a95a"/>
    <use href="#i-discord" x="55" y="55" width="31" height="31"/></svg></div>
  <div class="dock-item"><svg width="84" height="84">
    <rect x="-3" y="11" width="90" height="62" fill="#232427"/><g stroke="#85868a" stroke-width="1"><path d="M20 22H60M20 27H62M20 32H58M20 37H62M20 42H56M20 47H62M20 52H60M20 57H50M20 62H58M66 22H84M66 27H82M66 32H84M66 37H80M-1 25H12M-1 32H12M-1 39H10M-1 46H12M-1 53H12"/></g><rect x="-3" y="60" width="17" height="3" fill="#2a8cee"/>
    <use href="#i-slack" x="55" y="55" width="31" height="31"/></svg></div>
  <div class="dock-item"><svg width="84" height="84">
    <rect x="-3" y="17" width="90" height="50" fill="#2a2a2c"/><rect x="-3" y="17" width="6" height="50" fill="#3a3a3c"/><g fill="#efefef"><rect x="6" y="23" width="7" height="16"/><rect x="16" y="23" width="7" height="16"/><rect x="26" y="23" width="7" height="16"/><rect x="36" y="23" width="7" height="16"/><rect x="46" y="23" width="7" height="16"/><rect x="56" y="23" width="7" height="16"/><rect x="66" y="23" width="7" height="16"/><rect x="76" y="23" width="7" height="16"/></g><g stroke="#6a6a6e" stroke-width="1"><path d="M6 44H80M6 50H80M6 56H80M6 62H80"/></g>
    <use href="#i-word" x="55" y="57" width="31" height="31"/></svg></div>
  <div class="dock-item"><svg width="84" height="84">
    <rect x="-3" y="3" width="90" height="78" fill="#1f1f21"/><rect x="-3" y="3" width="30" height="78" fill="#2a2a2c"/><rect x="-3" y="30" width="30" height="9" fill="#4a4a4e"/><g fill="#8a7a6a"><circle cx="3" cy="23" r="3.500"/><circle cx="13" cy="23" r="3.500"/><circle cx="23" cy="23" r="3.500"/><circle cx="3" cy="44" r="2.500"/><circle cx="3" cy="54" r="2.500"/><circle cx="3" cy="64" r="2.500"/><circle cx="3" cy="74" r="2.500"/></g><g fill="#1e8cf0"><rect x="52" y="14" width="34" height="4"/><rect x="60" y="24" width="26" height="4"/><rect x="68" y="38" width="18" height="4"/><rect x="62" y="52" width="24" height="4"/></g><g fill="#3f3f42"><rect x="30" y="8" width="24" height="6"/><rect x="30" y="30" width="30" height="6"/><rect x="30" y="60" width="20" height="6"/></g>
    <use href="#i-messages" x="55" y="55" width="31" height="31"/></svg></div>
  <div class="dock-item"><svg width="84" height="84">
    <rect x="-3" y="18" width="90" height="47" fill="#f8f8f8"/><rect x="-3" y="18" width="90" height="3" fill="#ccc"/><g stroke="#9aa2ad" stroke-width=".8"><path d="M1 25H26M1 29H34M5 33H40M5 37H30M5 41H36M1 45H24M5 49H30M60 26H82M60 30H80M60 34H82M60 42H78M60 46H82"/></g><path d="M-3 52H50" stroke="#777" stroke-width="1"/><g stroke="#777" stroke-width=".8"><path d="M1 56H26M1 60H30M36 56H48M36 60H44"/></g>
    <use href="#i-pycharm" x="55" y="55" width="31" height="31"/></svg></div>
  <div class="dock-item"><svg width="84" height="84">
    <path d="M7 18L14 78Q16 84 42 85Q68 84 70 78L76 18Z" fill="url(#g-trash)"/><ellipse cx="41.500" cy="17" rx="34.500" ry="9" fill="#7d7e7f"/>
    <polygon points="14,14 22,-3 30,8 38,0 46,12 56,-5 66,10 70,16 54,24 28,24" fill="#efefef"/><polygon points="30,12 36,22 24,22" fill="#d04a3a"/><polygon points="48,10 56,22 44,22" fill="#2a6eb0"/><polygon points="38,14 44,24 34,24" fill="#3b8a5a"/></svg></div>
</footer>
</body>
</html>
```

FILE: styles.css
```css
* { box-sizing: border-box; }

html, body { margin: 0; padding: 0; }

.desktop {
  position: relative;
  width: 3840px;
  height: 2160px;
  overflow: hidden;
  display: flex;
  flex-direction: column;
  background: #4f0515;
  font-family: Inter, "Noto Sans", "Liberation Sans", sans-serif;
  color: #212529;
}

.defs { position: absolute; }
.sym { overflow: visible; }
svg { overflow: visible; flex: none; display: block; }
.wallpaper { position: absolute; left: 0; top: 0; }
.svg-bold { font-family: Inter, sans-serif; font-weight: 700; }
.svg-med { font-family: Inter, sans-serif; font-weight: 500; }
.svg-light { font-family: Inter, sans-serif; font-weight: 300; }
.badge-c { fill: #f4433b; }
.badge-t { fill: #fff; font-family: Inter, sans-serif; font-size: 25px; }

.desk-label {
  position: absolute;
  right: 24px;
  font-size: 24px;
  line-height: 30px;
  color: #d6d6d8;
}
.label-a { top: 431px; right: 36px; }
.label-b { top: 1362px; }
.label-c { top: 1587px; }

/* Menu bar */
.menubar {
  position: relative;
  flex: none;
  height: 48px;
  display: flex;
  align-items: center;
  justify-content: space-between;
  padding-left: 43px;
  background: linear-gradient(90deg, #26618f 0%, #22517f 15%, #1e3f72 28%, #1c2560 50%, #1c1c55 100%);
  color: #e6eaf0;
  font-size: 26px;
  letter-spacing: -.4px;
}
.menu-left { display: flex; align-items: center; gap: 42.7px; }
.apple-logo { margin-right: 2px; margin-top: -4px; }
.menu-app { font-weight: 700; color: #f4f5f7; }
.status {
  display: grid;
  grid-template-columns: 40px 114px 58px 102px 26px 112px 28px 114px 50px 84px 46px 78px auto;
  justify-items: center;
  align-items: center;
  width: 1151px;
}
.clock { justify-self: start; margin-left: 7px; white-space: nowrap; letter-spacing: .1px; }

/* Window */
.window {
  position: relative;
  flex: none;
  display: flex;
  flex-direction: column;
  width: 3742px;
  height: 1844px;
  margin: 2px 0 0 58px;
  border-radius: 20px;
  overflow: hidden;
  background: #fff;
  box-shadow: 0 0 0 2px #0a0a0c, 0 28px 100px rgba(0, 0, 0, .7);
}
.toolbar {
  flex: none;
  height: 104px;
  display: flex;
  align-items: center;
  padding: 2px 36px 0 40px;
  background: #3a3839;
  border-bottom: 2px solid #0e0e10;
  box-shadow: inset 0 2px 0 #77767a;
}
.traffic { display: flex; gap: 16px; }
.light { width: 24px; height: 24px; border-radius: 50%; display: block; }
.red { background: #ff5f57; }
.amber { background: #febc2e; }
.green { background: #28c840; }
.tb-sidebar { margin-left: 52px; }
.tb-back { margin-left: 52px; }
.tb-forward { margin-left: 55px; }
.extensions {
  display: flex;
  align-items: center;
  gap: 33.5px;
  margin-left: 379px;
  width: 334px;
}
.ext-shield { margin-left: 6px; }
.address {
  position: relative;
  width: 1520px;
  height: 56px;
  margin-left: 24px;
  border-radius: 10px;
  background: #464447;
  color: #fff;
  font-size: 26px;
  letter-spacing: -.3px;
  display: flex;
  align-items: center;
  justify-content: center;
}
.address-text { margin-left: 2px; }
.dim { color: #d8d8d9; }
.reload { position: absolute; right: 14px; top: 16px; }
.toolbar-right {
  display: flex;
  align-items: center;
  gap: 42px;
  margin-left: auto;
}

/* Page navbar */
.navbar {
  flex: none;
  height: 112px;
  display: flex;
  align-items: center;
  padding: 0 32px;
  background: #343a40;
  color: #fff;
  font-size: 32px;
  letter-spacing: -.8px;
}
.brand { font-size: 40px; letter-spacing: -1.6px; margin-right: 32px; white-space: nowrap; }
.nav-links { display: flex; }
.nav-link { padding: 16px; line-height: 48px; white-space: nowrap; }
.nav-right { margin-left: auto; }

/* Buttons */
.btn {
  display: block;
  padding: 15px 24px 13px;
  height: 76px;
  line-height: 48px;
  font-size: 32px;
  letter-spacing: -.75px;
  border-radius: 8px;
  color: #fff;
  white-space: nowrap;
}
.btn-success { background: #28a745; }
.btn-danger { background: #dc3545; }
.btn-primary { background: #007bff; letter-spacing: 0; }
.btn-secondary { background: #6c757d; letter-spacing: -.2px; }
.nav-btn { margin-left: 32px; margin-bottom: 4px; letter-spacing: -1.1px; }

/* Page content */
.page { flex: 1; background: #fff; }
.card {
  width: 2220px;
  margin: 8px auto 0;
  padding: 42px 39px 40px;
  border: 2px solid #dfdfdf;
  border-radius: 8px;
  background: #fff;
  font-size: 32px;
  line-height: 48px;
  letter-spacing: -.8px;
}
.card-title {
  margin: 0 0 14px;
  font-size: 80px;
  font-weight: 500;
  line-height: 96px;
  letter-spacing: -3.4px;
}
.list { list-style: none; margin: 0; padding: 0; }
.list-item {
  padding: 25px 41px 23px;
  border-bottom: 2px solid #dfdfdf;
}
.list-item strong { font-weight: 700; letter-spacing: -.3px; }
.actions { display: flex; gap: 49px; margin-top: 48px; }

/* Dock */
.dock {
  position: relative;
  flex: none;
  align-self: flex-start;
  display: flex;
  margin: 130px 0 0 174px;
  height: 125px;
  padding: 14px 4px 0;
  border: 2px solid rgba(255, 255, 255, .2);
  border-radius: 36px;
  background: rgba(255, 255, 255, .07);
  box-shadow: 0 0 0 1px rgba(0, 0, 0, .35);
}
.dock-item {
  width: 104px;
  display: flex;
  flex-direction: column;
  align-items: center;
}
.dock-item.on::after {
  content: "";
  width: 8px;
  height: 9px;
  margin-top: 14px;
  border-radius: 50%;
  background: #d78fa5;
}
.dock-sep {
  width: 2px;
  height: 93px;
  margin: 2px 22px 0 24px;
  background: rgba(255, 255, 255, .3);
}
```
